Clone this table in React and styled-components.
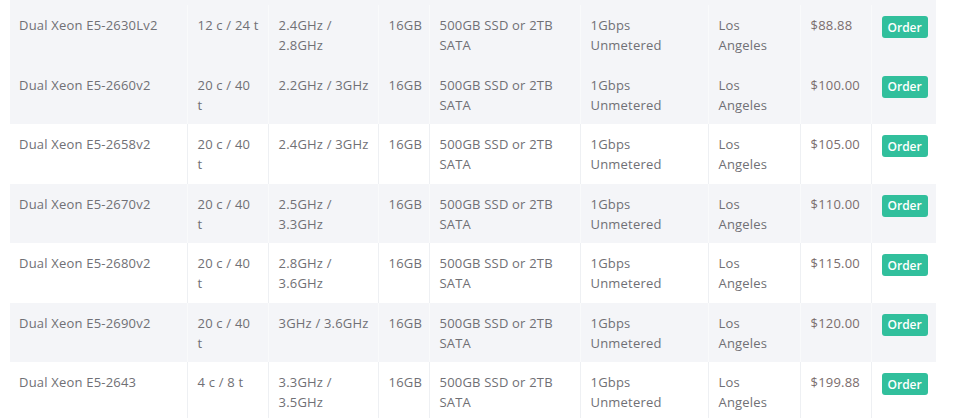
import React from "react"
import styled, { createGlobalStyle } from 'styled-components'

const Global = createGlobalStyle`
  body {
    margin: 0;
    background: #fff;
    font-family: "Open Sans", "Liberation Sans", sans-serif;
  }
`

const Wrapper = styled.div`
  padding: 0 25px 0 10px;
`

const Table = styled.table`
  width: 926px;
  border-collapse: collapse;
  table-layout: fixed;
  font-size: 13px;
  line-height: 20px;
  letter-spacing: 0.2px;
  color: #707075;
`

const Cap = styled.tr`
  height: 5px;
  background: #f4f5f8;
`

const Row = styled.tr`
  background: ${p => (p.striped ? '#f4f5f8' : '#fff')};
`

const Cell = styled.td`
  vertical-align: top;
  padding: 10px 10px 9.5px;
  border-left: 1px solid ${p => (p.striped ? '#f9fafb' : '#eef0f3')};
  &:first-child {
    border-left: none;
    padding-left: 9px;
  }
`

const Line = styled.div`
  white-space: nowrap;
`

const Price = styled.span`
  color: #7a6d6d;
`

const OrderButton = styled.button`
  display: block;
  margin-top: 1px;
  height: 22px;
  padding: 0 6px;
  border: none;
  border-radius: 3px;
  background: #31bf9c;
  color: #fff;
  font-family: inherit;
  font-size: 12px;
  font-weight: 600;
  letter-spacing: 0;
  cursor: pointer;
`

const widths = [177, 81, 110, 51, 151, 128, 92, 71, 65]

const servers = [
    { cpu: 'Dual Xeon E5-2630Lv2', cores: ['12 c / 24 t'], clock: ['2.4GHz /', '2.8GHz'], price: '$88.88' },
    { cpu: 'Dual Xeon E5-2660v2', cores: ['20 c / 40', 't'], clock: ['2.2GHz / 3GHz'], price: '$100.00' },
    { cpu: 'Dual Xeon E5-2658v2', cores: ['20 c / 40', 't'], clock: ['2.4GHz / 3GHz'], price: '$105.00' },
    { cpu: 'Dual Xeon E5-2670v2', cores: ['20 c / 40', 't'], clock: ['2.5GHz /', '3.3GHz'], price: '$110.00' },
    { cpu: 'Dual Xeon E5-2680v2', cores: ['20 c / 40', 't'], clock: ['2.8GHz /', '3.6GHz'], price: '$115.00' },
    { cpu: 'Dual Xeon E5-2690v2', cores: ['20 c / 40', 't'], clock: ['3GHz / 3.6GHz'], price: '$120.00' },
    { cpu: 'Dual Xeon E5-2643', cores: ['4 c / 8 t'], clock: ['3.3GHz /', '3.5GHz'], price: '$199.88' },
]

const Lines = ({ items }) => items.map((text, i) => <Line key={i}>{text}</Line>)

const App = () => {
    return (
        <Wrapper>
            <Global />
            <Table>
                <colgroup>
                    {widths.map((w, i) => <col key={i} style={{ width: w }} />)}
                </colgroup>
                <tbody>
                    <Cap><td colSpan={9} /></Cap>
                    {servers.map((s, i) => {
                        const striped = i !== 2 && i !== 4 && i !== 6
                        return (
                            <Row key={s.cpu} striped={striped}>
                                <Cell striped={striped}><Line>{s.cpu}</Line></Cell>
                                <Cell striped={striped}><Lines items={s.cores} /></Cell>
                                <Cell striped={striped}><Lines items={s.clock} /></Cell>
                                <Cell striped={striped}><Line>16GB</Line></Cell>
                                <Cell striped={striped}><Lines items={['500GB SSD or 2TB', 'SATA']} /></Cell>
                                <Cell striped={striped}><Lines items={['1Gbps', 'Unmetered']} /></Cell>
                                <Cell striped={striped}><Lines items={['Los', 'Angeles']} /></Cell>
                                <Cell striped={striped}><Price>{s.price}</Price></Cell>
                                <Cell striped={striped}><OrderButton>Order</OrderButton></Cell>
                            </Row>
                        )
                    })}
                </tbody>
            </Table>
        </Wrapper>
    )
}

export default App
